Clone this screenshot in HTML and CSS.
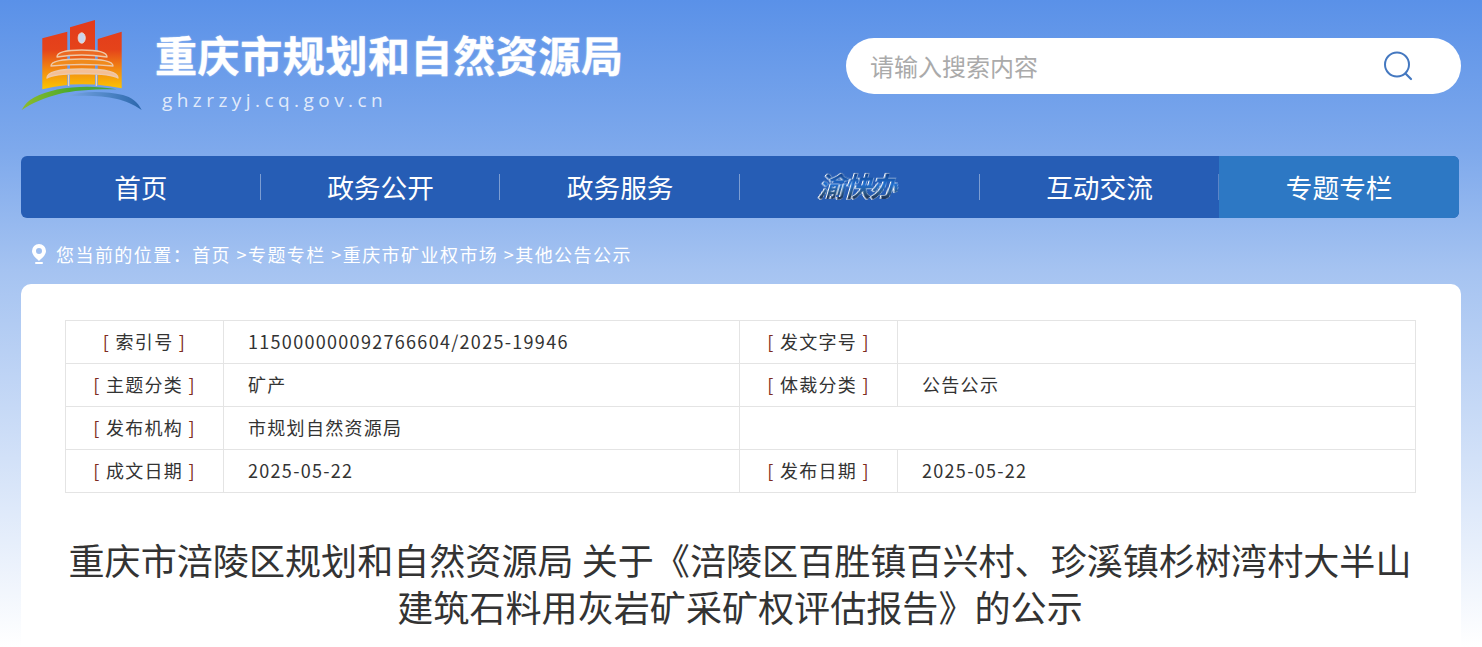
FILE: index.html
```html
<!DOCTYPE html>
<html lang="zh-CN">
<head>
<meta charset="utf-8">
<title>重庆市规划和自然资源局</title>
<link rel="stylesheet" href="styles.css">
</head>
<body>
<header class="top">
  <div class="brand">
    <svg class="logo" viewBox="0 0 122 94" width="122" height="94" aria-hidden="true">
      <defs>
        <linearGradient id="lg" gradientUnits="userSpaceOnUse" x1="0" y1="1" x2="0" y2="71">
          <stop offset="0" stop-color="#e23a1c"/><stop offset=".42" stop-color="#e5431a"/>
          <stop offset=".72" stop-color="#f28c12"/><stop offset="1" stop-color="#fdc800"/>
        </linearGradient>
        <linearGradient id="lb" x1="0" y1="0" x2="1" y2="0">
          <stop offset="0" stop-color="#7ba6e6"/><stop offset=".55" stop-color="#4f86c6"/><stop offset="1" stop-color="#2a66ac"/>
        </linearGradient>
        <linearGradient id="lgr" x1="0" y1="0" x2="1" y2="0">
          <stop offset="0" stop-color="#8dbb2e"/><stop offset=".5" stop-color="#4dab2c"/><stop offset="1" stop-color="#3fa24a"/>
        </linearGradient>
      </defs>
      <path d="M21.3 19.3 L46.3 12.7 V66 Q33 67.5 21.3 70.3Z M49 8.3 L74 1 V65.6 Q61 65 49 65.6Z M76.7 20 L100.7 12.7 V69.3 Q88 67 76.7 65.8Z" fill="url(#lg)"/>
      <ellipse cx="60.7" cy="19" rx="3.6" ry="5.3" fill="#c9d6ee" stroke="#f3dccb" stroke-width=".8"/>
      <g fill="none" stroke="#eec9a8" stroke-width="1.4" stroke-linejoin="round">
        <path d="M36 38 Q36 31 60.7 31 Q86 31 86 38 Q72 36 60.7 36 Q48 36 36 38Z" fill="#ec6a22"/>
        <path d="M30 47 Q30 40 60.7 40 Q92 40 92 47 Q76 45.5 60.7 45.5 Q45 45.5 30 47Z" fill="#f08a1c"/>
        <path d="M26 59 Q26 50 60.7 50 Q97 50 97 59 Q92 55 60.7 54.5 Q31 55 26 59Z" fill="#f4bf94"/>
      </g>
      <path d="M47.6 56 V67 M75.4 56 V67" stroke="#eed3b4" stroke-width="1.4"/>
      <path d="M.7 91 C6 80 18 75 36 70.5 C56 66.5 78 67 95.7 70.3 C72 70 52 71.5 38 75 C24 78.5 11 84 .7 91Z" fill="url(#lgr)"/>
      <path d="M42 78 C60 71.5 84 72 102 76 C110 78 117 83 120.7 91 C112 85 104 82 96 80 C80 76.5 60 76 42 78Z" fill="url(#lb)"/>
    </svg>
    <div class="brand-text">
      <div class="site-name">重庆市规划和自然资源局</div>
      <div class="site-url">ghzrzyj.cq.gov.cn</div>
    </div>
  </div>
  <div class="search">
    <span class="placeholder">请输入搜索内容</span>
    <svg class="search-icon" viewBox="0 0 30 30" width="30" height="30" aria-hidden="true">
      <circle cx="14" cy="13.5" r="12" fill="none" stroke="#4478c0" stroke-width="2"/>
      <path d="M23 23 L28 28" stroke="#4478c0" stroke-width="2.2" stroke-linecap="round"/>
    </svg>
  </div>
</header>
<nav class="nav">
  <a class="nav-item">首页</a>
  <a class="nav-item">政务公开</a>
  <a class="nav-item">政务服务</a>
  <a class="nav-item"><span class="ykb">渝快办</span></a>
  <a class="nav-item">互动交流</a>
  <a class="nav-item active">专题专栏</a>
</nav>
<div class="crumb">
  <svg class="pin" viewBox="0 0 16 20" width="16" height="20" aria-hidden="true">
    <path fill-rule="evenodd" d="M8 0a7 7 0 0 1 7 7c0 4-4 7-7 10C5 14 1 11 1 7a7 7 0 0 1 7-7Zm0 4a3 3 0 1 0 0 6 3 3 0 0 0 0-6Z" fill="#fff"/>
    <rect x="4" y="18" width="8" height="2" rx="1" fill="#fff"/>
  </svg>
  <span>您当前的位置：首页 &gt;专题专栏 &gt;重庆市矿业权市场 &gt;其他公告公示</span>
</div>
<main class="card">
  <table class="meta">
    <colgroup><col class="c1"><col class="c2"><col class="c1"><col class="c4"></colgroup>
    <tr><th><i>[</i> 索引号 <i>]</i></th><td>115000000092766604/2025-19946</td><th><i>[</i> 发文字号 <i>]</i></th><td></td></tr>
    <tr><th><i>[</i> 主题分类 <i>]</i></th><td>矿产</td><th><i>[</i> 体裁分类 <i>]</i></th><td>公告公示</td></tr>
    <tr><th><i>[</i> 发布机构 <i>]</i></th><td>市规划自然资源局</td><td colspan="2"></td></tr>
    <tr><th><i>[</i> 成文日期 <i>]</i></th><td>2025-05-22</td><th><i>[</i> 发布日期 <i>]</i></th><td>2025-05-22</td></tr>
  </table>
  <h1 class="title">重庆市涪陵区规划和自然资源局 关于《涪陵区百胜镇百兴村、珍溪镇杉树湾村大半山建筑石料用灰岩矿采矿权评估报告》的公示</h1>
</main>
</body>
</html>
```
FILE: styles.css
```css
* { box-sizing: border-box; }
html, body { margin: 0; padding: 0; }
body {
  height: 647px;
  overflow: hidden;
  padding: 0 23px 0 21px;
  background: linear-gradient(180deg, #5a91e8 0, #7ea9ec 150px, #a5c3f1 270px, #fff 647px);
  font-family: "Noto Sans CJK SC", "Noto Sans", sans-serif;
}
.top { height: 156px; display: flex; justify-content: space-between; padding-top: 38px; }
.brand { display: flex; margin-top: -19px; height: 94px; }
.logo { flex: none; margin-right: 12px; }
.brand-text { padding-top: 5px; }
.site-name { font-size: 42px; line-height: 60px; letter-spacing: .6px; font-weight: 700; color: #fff; -webkit-text-stroke: .3px #fff; text-shadow: 0 0 2px rgba(255,255,255,.5); white-space: nowrap; }
.site-url { font-size: 19px; line-height: 26px; letter-spacing: 4.45px; color: rgba(255,255,255,.8); padding-left: 7px; margin-top: 3px; font-family: "Open Sans", sans-serif; }
.search { width: 615px; height: 56px; margin-right: -2px; background: #fff; border-radius: 28px; display: flex; align-items: center; justify-content: space-between; padding: 0 48px 0 24px; }
.placeholder { font-size: 24px; color: #aaa; padding-bottom: 2px; }
.search-icon { display: block; }
.nav { display: flex; height: 62px; background: #265db5; border-radius: 6px; overflow: hidden; }
.nav-item { flex: 1 1 0; display: flex; align-items: center; justify-content: center; color: #fff; font-size: 26.7px; padding-bottom: 2px; position: relative; }
.nav-item + .nav-item::before { content: ""; position: absolute; left: -1px; top: 18px; height: 26px; width: 1px; background: rgba(255,255,255,.4); }
.nav-item.active { background: #2d78c4; }
.nav-item.active::before { background: rgba(255,255,255,.25); }
.ykb {
  display: inline-block;
  font-size: 27px;
  line-height: 32px;
  font-weight: 700;
  letter-spacing: -1px;
  color: transparent;
  background: linear-gradient(180deg, #123f86 10%, #1e6ed0 45%, #2a5a8c 70%, #1a2f52 90%);
  -webkit-background-clip: text;
  background-clip: text;
  filter: drop-shadow(.5px 0 .3px #fff) drop-shadow(-.5px 0 .3px #fff) drop-shadow(0 .5px .3px #e6eef8);
  transform: skewX(-16deg);
}
.crumb { height: 66px; display: flex; align-items: center; gap: 9px; padding: 6px 0 0 10px; color: #fff; font-size: 18px; letter-spacing: 1.45px; }
.pin { flex: none; }
.card { background: #fff; border-radius: 10px 10px 0 0; margin-right: -2px; padding: 36px 46px 0 44px; height: 363px; }
.meta { width: 1350px; border-collapse: collapse; table-layout: fixed; font-size: 18px; letter-spacing: 1.3px; color: #333; }
.c1 { width: 158px; }
.c2 { width: 516px; }
.c4 { width: 518px; }
.meta th, .meta td { height: 43px; border: 1px solid #e4e4e4; padding: 0 0 2px; font-weight: 400; }
.meta th { text-align: center; }
.meta th i { font-style: normal; color: #7d2a20; }
.meta td { padding-left: 24px; }
.title { margin: 43px 0 0; font-size: 36.1px; line-height: 47px; font-weight: 400; text-align: center; color: #333; }
```
